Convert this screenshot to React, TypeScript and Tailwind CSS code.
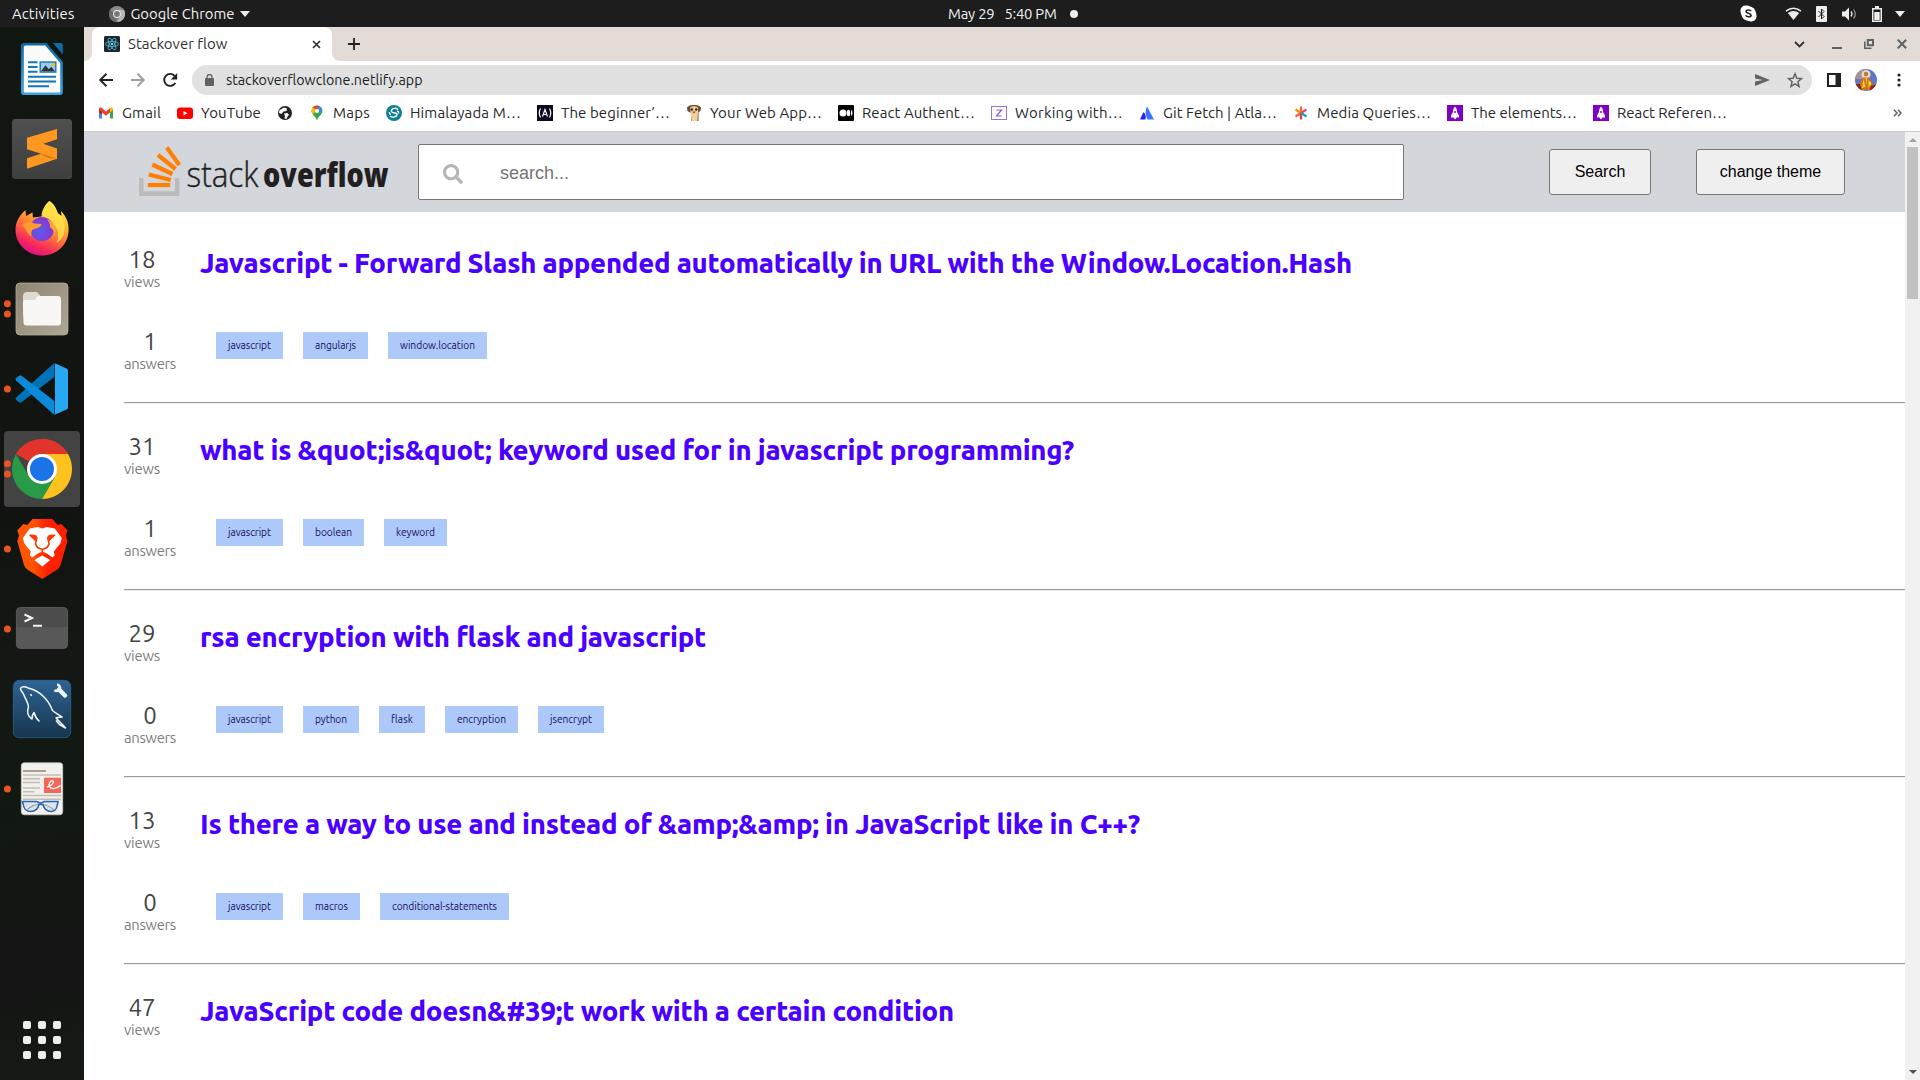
import { useLayoutEffect, useRef, useState, type ReactNode } from "react";
import { FaSearch } from "react-icons/fa";

const UI = "font-['Ubuntu','Noto_Sans',sans-serif]";

/* Text set to a given width by adjusting its tracking. */
function Fit({ w, className = "", children }: { w: number; className?: string; children: string }) {
  const ref = useRef<HTMLSpanElement>(null);
  const [gap, setGap] = useState(0);
  useLayoutEffect(() => {
    if (ref.current) setGap((w - ref.current.getBoundingClientRect().width) / children.length);
    // eslint-disable-next-line
  }, [w, children]);
  return (
    <span className={"block shrink-0 whitespace-nowrap " + className} style={{ width: w }}>
      <span ref={ref} className="inline-block" style={{ letterSpacing: gap }}>
        {children}
      </span>
    </span>
  );
}

/* ---------- top bar ---------- */

function TopBar() {
  return (
    <div className="grid h-[27px] shrink-0 grid-cols-[948px_1fr_auto] items-center bg-[#1d1d1d] text-[14.800px] leading-[26px] text-[#f2f2f2]">
      <div className="flex h-full items-center pl-3">
        <Fit w={62.500}>Activities</Fit>
        <svg className="ml-[34px]" width="16" height="16" viewBox="0 0 16 16">
          <circle cx="8" cy="8" r="8" fill="#8a8a8a" />
          <path d="M8 8 1 4a8 8 0 0 0 6 12z" fill="#6b6b6b" />
          <path d="M8 4h7a8 8 0 0 1-7 12l3.500-6z" fill="#b5b5b5" />
          <circle cx="8" cy="8" r="3.900" fill="#eee" />
          <circle cx="8" cy="8" r="2.900" fill="#777" />
        </svg>
        <Fit w={104} className="ml-[6px]">Google Chrome</Fit>
        <svg className="ml-[5px]" width="10" height="6" viewBox="0 0 10 6"><path d="M0 0h10L5 6z" fill="#eee" /></svg>
      </div>
      <div className="flex items-center">
        <Fit w={46.500}>May 29</Fit>
        <Fit w={52} className="ml-[10px]">5:40 PM</Fit>
        <span className="ml-[13px] size-2 rounded-full bg-[#eeeeee]" />
      </div>
      <div className="flex items-center pr-[15px]">
        <svg width="17" height="17" viewBox="0 0 17 17">
          <rect x="0.500" y="0.500" width="11" height="11" rx="5" fill="#fff" />
          <rect x="5.500" y="5.500" width="11" height="11" rx="5" fill="#fff" />
          <circle cx="8.500" cy="8.500" r="7.300" fill="#fff" />
          <path d="M11 6.200c-.6-1.500-4.800-1.700-4.900.3 0 2 5 1.300 5 3.700 0 2-4.500 2.200-5.300.1" fill="none" stroke="#222" strokeWidth="1.600" />
        </svg>
        <svg className="ml-[28px]" width="17" height="14" viewBox="0 0 17 14">
          <path d="M1 4.200Q8.500-1.800 16 4.200" fill="none" stroke="#eee" strokeWidth="1.500" />
          <path d="M2.800 6Q8.500 2 14.200 6L8.500 13z" fill="#eee" />
        </svg>
        <svg className="ml-[14px]" width="11" height="16" viewBox="0 0 11 16">
          <rect width="11" height="16" rx="1" fill="#eee" />
          <path d="M2.500 5 8 10.500 5.500 13V3L8 5.500 2.500 11" fill="none" stroke="#1d1d1d" />
        </svg>
        <svg className="ml-[15px]" width="16" height="14" viewBox="0 0 16 14">
          <path d="M0 4.500h3L7 .5v13l-4-4H0z" fill="#eee" />
          <path d="M9 4.500q2 2.500 0 5" fill="none" stroke="#eee" strokeWidth="1.300" />
          <path d="M11.500 2.500q3.500 4.500 0 9" fill="none" stroke="#999" strokeWidth="1.200" />
        </svg>
        <svg className="ml-[14px]" width="10" height="16" viewBox="0 0 10 16">
          <path d="M3 0h4v2h3v14H0V2h3z" fill="#eee" />
          <path d="M1.500 3.500h7v11h-7z" fill="#1d1d1d" />
          <path d="M2.300 6h5.400v8H2.300z" fill="#eee" />
        </svg>
        <svg className="ml-[13px]" width="10" height="6" viewBox="0 0 10 6"><path d="M0 0h10L5 6z" fill="#eee" /></svg>
      </div>
    </div>
  );
}

/* ---------- dock ---------- */

function Dots({ n }: { n: number }) {
  return (
    <>
      {(n === 2 ? [34.700, 45] : n === 1 ? [40] : []).map((y) => (
        <circle key={y} cx="7.400" cy={y} r="3.500" fill="#e95420" />
      ))}
    </>
  );
}

function DockItem({ dots = 0, children }: { dots?: number; children: ReactNode }) {
  return (
    <svg className="block shrink-0" width="84" height="80" viewBox="0 0 84 80">
      {children}
      <Dots n={dots} />
    </svg>
  );
}

function Dock() {
  return (
    <div className="flex w-[84px] shrink-0 flex-col bg-[linear-gradient(170deg,#10170f_0%,#121512_20%,#101310_45%,#151715_60%,#111911_72%,#141414_88%,#151a15_100%)] pt-[2px]">
      <DockItem>
        <defs>
          <linearGradient id="wr" x1="0" y1="0" x2="0" y2="1"><stop offset="0" stopColor="#0a6aa5" /><stop offset="1" stopColor="#3da5e0" /></linearGradient>
        </defs>
        <path d="M24 14h22.500L62.800 33v30a3 3 0 0 1-3 3H24a3 3 0 0 1-3-3V17a3 3 0 0 1 3-3z" fill="url(#wr)" />
        <path d="M53 14h7.800a2 2 0 0 1 2 2v9.500z" fill="#0e6ba8" />
        <path d="M25.300 16.500h20L60.200 34v28a1.500 1.500 0 0 1-1.500 1.500H25.300A1.500 1.500 0 0 1 23.800 62V18a1.500 1.500 0 0 1 1.500-1.500z" fill="#fbfbfb" />
        <path d="M28 33.300h9.500M28 38h9.500M28 42.700h9.500M28 47.700h28M28 52.500h28M28 57.300h21" stroke="#1477b5" strokeWidth="2" />
        <rect x="39.500" y="32.300" width="17" height="11.500" fill="#1b7fc0" />
        <rect x="41" y="33.800" width="14" height="8.500" fill="#9bcbea" />
        <path d="M41 42.300l4.500-6 3.300 4 2.500-2.500 3.700 4.500z" fill="#333" />
        <circle cx="53.500" cy="35.500" r="1.800" fill="#f5c211" />
      </DockItem>

      <DockItem>
        <defs>
          <linearGradient id="st" x1="0" y1="0" x2="0" y2="1"><stop offset="0" stopColor="#4f4f4f" /><stop offset="1" stopColor="#3f3f3f" /></linearGradient>
        </defs>
        <rect x="12" y="10" width="60" height="60" rx="3.500" fill="url(#st)" />
        <path d="M27 49.300 57 39.500v10.200L27 59.700z" fill="#ff9820" />
        <path d="M27 28.700 57 20v10.300L27 40.300z" fill="#ff9820" />
        <path d="M27 40.300V30L44.700 35.300 57 39.500v10.300L39.700 44.300z" fill="#ff9820" />
        <path d="M39.700 44.300 57 49.800l-9-1z" fill="#d67300" />
      </DockItem>

      <DockItem>
        <defs>
          <linearGradient id="fx" x1="0.800" y1="0.050" x2="0.350" y2="1"><stop offset="0" stopColor="#fff44f" /><stop offset=".3" stopColor="#ffbd2f" /><stop offset=".6" stopColor="#ff6a3c" /><stop offset=".85" stopColor="#f5245f" /><stop offset="1" stopColor="#d9138a" /></linearGradient>
          <radialGradient id="fg" cx=".4" cy=".6" r=".6"><stop offset="0" stopColor="#5a5cf0" /><stop offset="1" stopColor="#8a35d0" /></radialGradient>
        </defs>
        <path d="M49.500 12c4.500 3 6.500 7 8.500 12.500l3.500 2.500-.5-5c5 5 8 12 7.600 19.500C68 56 56.500 66.500 42 66.500S15.500 55 15.500 41c0-8 3.500-14 10-20l.5 6 6.500-3.500.5 5 8.500-1C42 21 45.500 15 49.500 12z" fill="url(#fx)" />
        <path d="M49.500 12c4.500 3 6.500 7 8.500 12.500l3.500 2.500c5 9 4.500 22-5 27 5-11-1-20-9.500-24-4-2-6-8-5.500-3 .5-6 4-12 8-15z" fill="#ffe14a" opacity=".85" />
        <circle cx="42" cy="40" r="12" fill="url(#fg)" />
        <path d="M22 36c5-4 9-3.500 12.500-1.500l7 .5-.5 2c-3 2.500-7 2.500-9 4.500q-1.500 2.500-.5 6c-4-2-5-7-9.500-11.500z" fill="#ff9a2c" />
        <path d="M47 30.500c8 2 12 12 5 19.500 3-6 2-9-2-12 .5-3-1-5-3-7.500z" fill="#ffa534" />
      </DockItem>

      <DockItem dots={2}>
        <defs>
          <linearGradient id="fi" x1="0" y1="0" x2="1" y2="1"><stop offset="0" stopColor="#8f8672" /><stop offset="1" stopColor="#aea795" /></linearGradient>
        </defs>
        <rect x="16" y="14" width="52" height="52" rx="4" fill="url(#fi)" stroke="#b4ac9b" strokeWidth=".8" />
        <path d="M23 27a4 4 0 0 1 3.500-4H37l3.500 4H58v20H23z" fill="#dedad2" />
        <path d="M23 34a3 3 0 0 1 3-3h8.500l3.500-4h20a3 3 0 0 1 3 3v23.500a3 3 0 0 1-3 3H26.500a3 3 0 0 1-3-3z" fill="#f8f7f6" />
      </DockItem>

      <DockItem dots={1}>
        <path d="M54.300 14v14L21.500 53.300a2 2 0 0 1-2.400 0l-3-2.600a1.500 1.500 0 0 1 0-2.200z" fill="#0073b7" />
        <path d="M54.300 66V52L21.500 26.700a2 2 0 0 0-2.400 0l-3 2.600a1.500 1.500 0 0 0 0 2.200z" fill="#0a8ad8" />
        <path d="M54.300 14 67 19.800a1.800 1.800 0 0 1 1 1.700v37a1.800 1.800 0 0 1-1 1.700L54.300 66c.5 0 .7-.8.700-1.500v-49c0-.7-.2-1.500-.7-1.500z" fill="#27a8f2" />
      </DockItem>

      <DockItem dots={2}>
        <rect x="4" y="2" width="76" height="76" rx="4" fill="#434343" />
        <path d="M42 40 16 25a30 30 0 0 1 52 0z" fill="#e1352b" />
        <path d="M42 10a30 30 0 0 1 26 15H42z" fill="#e1352b" />
        <path d="M42 25h26a30 30 0 0 1-26 45l13-22.500z" fill="#fcc31e" />
        <path d="M16 25a30 30 0 0 0 26 45l13-22.500L29 47.500z" fill="#289a48" />
        <circle cx="42" cy="40" r="15" fill="#fff" />
        <circle cx="42" cy="40" r="12" fill="#1a73e8" />
      </DockItem>

      <DockItem dots={1}>
        <defs>
          <linearGradient id="br" x1="0" x2="1"><stop offset=".3" stopColor="#ff5500" /><stop offset=".6" stopColor="#ff2000" /></linearGradient>
        </defs>
        <path d="M32.500 10h20l5 6 4-1 6 6.500-1.700 5 1.700 5.500L60.500 56q-1 3-4 5L42.300 70 28 61q-3-2-4-5L17.300 32 19 26.500 17.300 21.500l6-6.500 4 1z" fill="url(#br)" />
        <path d="M42.300 19.500l4.500-1.500 8 1.500 7 9.500-1.500 5.500-6.500 8 1 4-2.500 2-5.500-4-4.500-2-4.500 2-5.500 4-2.500-2 1-4-6.500-8-1.500-5.500 7-9.500 8-1.500z" fill="#fff" />
        <path d="M28.500 25.800q6-.8 8.500 1.200l-1.500 5.500zM56 25.800q-6-.8-8.500 1.200l1.500 5.500z" fill="#ff3a00" />
        <path d="M37 28l-1.500 7 2 3.500 4.800 2 4.800-2 2-3.500-1.500-7M42.300 40v4" fill="none" stroke="#ff3a00" strokeWidth="1.600" />
        <path d="M42.300 46.500l8 4.500-8 6.500-8-6.500z" fill="#fff" />
      </DockItem>

      <DockItem dots={1}>
        <rect x="16.400" y="18.600" width="51.200" height="40.800" rx="4" fill="#585858" stroke="#666" strokeWidth=".8" />
        <path d="M16.800 38V22.500a3.600 3.600 0 0 1 3.600-3.600h43.200a3.600 3.600 0 0 1 3.600 3.600V38z" fill="#4c4c4c" />
        <path d="M24.500 25.500l7.500 3.500-7.500 3.500M33 36.800h9" fill="none" stroke="#f2f2f2" strokeWidth="2" />
      </DockItem>

      <DockItem>
        <defs>
          <linearGradient id="my" x1="0" y1="0" x2="0" y2="1"><stop offset="0" stopColor="#2d6494" /><stop offset="1" stopColor="#17354f" /></linearGradient>
        </defs>
        <rect x="13.300" y="11.300" width="57.400" height="57.400" rx="6" fill="url(#my)" stroke="#2b6a9e" strokeWidth=".7" />
        <path d="M39.500 52.500c-3-2.500-4.500-5-5.500-9-1.500 1.500-2 4-2 6.500-3.500-2-5.500-6-3.500-12.500-1-6-3.500-8-5-12.500-1-2-3-3.500-3-5.500.5-2.200 5-2.200 7.500-.5C40 21.500 48.500 31 52.500 41.500c3 2.500 6 4 9.500 6.500-2 .5-4.500 0-6 .8 2.500 3.500 5.500 5 9.500 10.200l-6-3.500-3.500-4" fill="none" stroke="#f3f8fb" strokeWidth="1.500" strokeLinejoin="round" />
        <path d="M30.500 25l1 2" stroke="#fff" strokeWidth="1.500" />
        <path d="M59 20.500 65 26.500" stroke="#eef6fb" strokeWidth="4.500" strokeLinecap="round" />
        <path d="M57 15.500a3.200 3.200 0 1 1-2.500 5.500" fill="none" stroke="#eef6fb" strokeWidth="2.600" />
      </DockItem>

      <DockItem dots={1}>
        <rect x="21.300" y="13.800" width="41.400" height="52" rx="3" fill="#f1f0ef" stroke="#cfcfcf" strokeWidth=".7" />
        <path d="M23 22h23" stroke="#a9a491" strokeWidth="2" />
        <path d="M23 26h38M23 29.700h17M23 33.500h17M23 39h17M23 42.700h11.500M23 46.500h38M23 50.300h38" stroke="#c2beb0" strokeWidth="1.500" />
        <rect x="44" y="28.700" width="17" height="15.300" fill="#f4685a" />
        <path d="M47 38c4-1 7.500-4 6-6-2-1.500-5 3-3.500 5.500 1.500 3 6 3 11-1" fill="none" stroke="#fff" strokeWidth="1.300" />
        <path d="M26.500 61.500Q33 55 41 55.500t14 6.500" fill="none" stroke="#777" strokeWidth="1.200" />
        <path d="M22.500 52.500h14l3 1.200h2l3-1.200h13.500l-.8 4q-1 6-6 6-6.500 0-8.200-7h-4q-1.500 7-8.500 7-6 0-7-6z" fill="#c4d3e6" fillOpacity=".45" stroke="#2a63ae" strokeWidth="1.500" />
      </DockItem>

      <div className="mt-auto mb-[21px] grid grid-cols-[8px_8px_8px] gap-[7px] self-center">
        {Array.from({ length: 9 }, (_, i) => (
          <span key={i} className="size-2 rounded-[2px] bg-[#eeeeec]" />
        ))}
      </div>
    </div>
  );
}

/* ---------- browser chrome ---------- */

function ReactMark() {
  return (
    <svg width="16" height="16" viewBox="0 0 16 16">
      <rect width="16" height="16" rx="1.500" fill="#20232a" />
      <g fill="none" stroke="#4fc3e0" strokeWidth=".8">
        <ellipse cx="8" cy="8" rx="6.500" ry="2.500" />
        <ellipse cx="8" cy="8" rx="6.500" ry="2.500" transform="rotate(60 8 8)" />
        <ellipse cx="8" cy="8" rx="6.500" ry="2.500" transform="rotate(120 8 8)" />
      </g>
      <circle cx="8" cy="8" r="1.300" fill="#61dafb" />
    </svg>
  );
}

function TabStrip() {
  return (
    <div className="flex h-[34px] shrink-0 items-center bg-[#e3dbd5]">
      <svg className="self-end" width="8" height="8" viewBox="0 0 8 8"><path d="M8 0v8H0a8 8 0 0 0 8-8z" fill="#fff" /></svg>
      <div className="flex h-full w-[240px] items-center rounded-t-lg bg-white pl-3">
        <ReactMark />
        <Fit w={99.500} className="ml-2 text-[15px] leading-5 text-[#303134]">Stackover flow</Fit>
        <svg className="ml-[84px]" width="9" height="9" viewBox="0 0 9 9"><path d="M1 1l7 7M8 1 1 8" stroke="#2b2b2b" strokeWidth="1.600" /></svg>
      </div>
      <svg className="self-end" width="8" height="8" viewBox="0 0 8 8"><path d="M0 0v8h8a8 8 0 0 1-8-8z" fill="#fff" /></svg>
      <svg className="ml-2" width="12" height="12" viewBox="0 0 12 12"><path d="M6 0v12M0 6h12" stroke="#222" strokeWidth="1.800" /></svg>
      <div className="ml-auto flex items-center pr-[13px]">
        <svg width="11" height="7" viewBox="0 0 11 7"><path d="M1 1l4.500 4.500L10 1" fill="none" stroke="#333" strokeWidth="1.800" /></svg>
        <svg className="ml-[27px] mt-[8px]" width="10" height="2" viewBox="0 0 10 2"><path d="M0 0h10v2H0z" fill="#5f6368" /></svg>
        <svg className="ml-[22px]" width="10" height="10" viewBox="0 0 10 10">
          <path d="M3.800 1h5.200v5.200H3.800z" fill="none" stroke="#5f6368" strokeWidth="2" />
          <path d="M.8 2.500v6.700h6.700" fill="none" stroke="#5f6368" strokeWidth="1.600" />
        </svg>
        <svg className="ml-[23px]" width="10" height="10" viewBox="0 0 10 10"><path d="M.8.8l8.400 8.400M9.200.8.800 9.200" stroke="#5f6368" strokeWidth="2" /></svg>
      </div>
    </div>
  );
}

function Toolbar() {
  return (
    <div className="flex h-[38px] shrink-0 items-center bg-white pl-[14px] pr-[19px]">
      <svg width="16" height="16" viewBox="0 0 16 16"><path d="M15 8H2.500M8.500 1.800 2.200 8l6.300 6.200" fill="none" stroke="#222" strokeWidth="1.900" /></svg>
      <svg className="ml-[16px]" width="16" height="16" viewBox="0 0 16 16"><path d="M1 8h12.500M7.500 1.800 13.800 8l-6.300 6.200" fill="none" stroke="#9e9e9e" strokeWidth="1.900" /></svg>
      <svg className="ml-[16px]" width="16" height="16" viewBox="0 0 16 16">
        <path d="M13.300 11a6 6 0 1 1-.7-7.200" fill="none" stroke="#222" strokeWidth="1.900" />
        <path d="M15.200 1v6.500H8.700z" fill="#222" />
      </svg>
      <div className="ml-[14px] flex h-[30px] w-[1620px] items-center rounded-full bg-[#e1e1e1] pl-[13px] pr-[9px]">
        <svg width="9" height="12" viewBox="0 0 9 12">
          <rect y="4" width="9" height="8" rx="1" fill="#5f6368" />
          <path d="M2 5V3a2.500 2.500 0 0 1 5 0v2" fill="none" stroke="#5f6368" strokeWidth="1.300" />
        </svg>
        <Fit w={196.500} className="ml-3 text-[14.300px] leading-5 text-[#202124]">stackoverflowclone.netlify.app</Fit>
        <svg className="ml-auto" width="15" height="12" viewBox="0 0 15 12"><path d="M0 0l15 6-15 6V7.500L8 6 0 4.500z" fill="#5f6368" /></svg>
        <svg className="ml-[17px]" width="16" height="16" viewBox="0 0 16 16"><path d="M8 1.800l1.800 4.400 4.700.4-3.600 3.100 1.100 4.600L8 11.800l-4 2.500 1.100-4.600L1.500 6.600l4.700-.4z" fill="none" stroke="#5f6368" strokeWidth="1.500" /></svg>
      </div>
      <svg className="ml-[15px]" width="14" height="14" viewBox="0 0 14 14"><path d="M1 1h12v12H1z" fill="#fff" stroke="#222" strokeWidth="2" /><path d="M8.500 1H13v12H8.500z" fill="#222" /></svg>
      <svg className="ml-[14px]" width="22" height="22" viewBox="0 0 22 22">
        <defs><clipPath id="av"><circle cx="11" cy="11" r="11" /></clipPath></defs>
        <g clipPath="url(#av)">
          <rect width="22" height="22" fill="#5f78c4" />
          <path d="M0 0h8v10H0z" fill="#a98f98" />
          <circle cx="11" cy="5.500" r="4.500" fill="#e8dcc0" />
          <circle cx="11" cy="5" r="2.200" fill="#b9783c" />
          <path d="M5 13l3.500-4.500h5L17 13l1 3-3 5H7l-3-4z" fill="#cf7414" />
          <path d="M8.500 10l2 8-3.500 1zM13.500 11l3 3-3 5zM10.500 9h1.500l-.5 8z" fill="#f7cf4a" />
          <path d="M0 15h5l2 7H0zM16 17l6-2v8h-8z" fill="#8e2416" />
        </g>
      </svg>
      <svg className="ml-auto" width="4" height="14" viewBox="0 0 4 14"><circle cx="2" cy="2" r="1.600" fill="#222" /><circle cx="2" cy="7" r="1.600" fill="#222" /><circle cx="2" cy="12" r="1.600" fill="#222" /></svg>
    </div>
  );
}

const rocket = (
  <>
    <rect width="16" height="16" fill="#8000c8" />
    <path d="M8 1.500q2.500 2.500 2.200 6l1.800 3v2H9.500L8 14.500 6.500 12.500H4v-2l1.800-3Q5.500 4 8 1.500z" fill="#fff" />
    <circle cx="8" cy="7" r="1" fill="#8000c8" />
  </>
);

const bookmarks: { label?: string; w?: number; icon: ReactNode }[] = [
  {
    label: "Gmail", w: 39,
    icon: (
      <>
        <path d="M1 4v9.500h3V7z" fill="#4285f4" /><path d="M15 4v9.500h-3V7z" fill="#34a853" />
        <path d="M1 5V3.500Q2.500 1.500 4 3l4 3.500L12 3v4.500l-4 3.200L1 5z" fill="#ea4335" />
        <path d="M12 3q2-1.500 3 .5V5l-3 2.500z" fill="#fbbc04" /><path d="M1 4.500 4 7v3L1 7.500z" fill="#c5221f" />
      </>
    ),
  },
  { label: "YouTube", w: 60, icon: <><rect y="2.500" width="16" height="11.500" rx="3" fill="#f00" /><path d="M6.500 6v4.500l4-2.250z" fill="#fff" /></> },
  {
    icon: (
      <>
        <circle cx="8" cy="8" r="7" fill="#222" />
        <path d="M2.500 5 7 2.500l3 1-.5 2.500-3 .5L4.500 9 2 8zM7 8.500l3.500-.5 1.500 2-1.500 1.500-1 2.500-2-.5L8 11z" fill="#fff" />
      </>
    ),
  },
  {
    label: "Maps", w: 37,
    icon: (
      <>
        <path d="M8 .5A5.500 5.500 0 0 1 13.500 6C13.500 9.500 9.500 11 8 15.500 6.500 11 2.500 9.500 2.500 6A5.500 5.500 0 0 1 8 .5z" fill="#34a853" />
        <path d="M8 .5A5.500 5.500 0 0 0 3.700 2.600L6.500 5 10.500 1.100A5.500 5.500 0 0 0 8 .5z" fill="#ea4335" />
        <path d="M10.500 1.100 6 6.500 8 8.500l5.300-4A5.500 5.500 0 0 0 10.500 1.100z" fill="#4285f4" />
        <path d="M3.700 2.600A5.500 5.500 0 0 0 4 9.600L8 5z" fill="#fbbc04" />
        <circle cx="8" cy="6" r="2" fill="#fff" />
      </>
    ),
  },
  {
    label: "Himalayada M…", w: 111,
    icon: (
      <>
        <circle cx="8" cy="8" r="8" fill="#0b7f93" />
        <path d="M12 4.500C9 2 4.500 4 5.500 6.500S11 7 11 9.500 6 13 4 11M3.500 7q-.5 2 1.500 2.500M12.500 8.500Q13 6.500 11 6" fill="none" stroke="#fff" strokeWidth="1.400" />
      </>
    ),
  },
  {
    label: "The beginner’…", w: 109,
    icon: (
      <>
        <rect width="16" height="16" fill="#0a0a23" />
        <path d="M3.500 3.500q-2.500 4.500 0 9M12.500 3.500q2.500 4.500 0 9M5.500 11.500 8 4.500l2.500 7M7 9.500h2" fill="none" stroke="#fff" strokeWidth="1.200" />
      </>
    ),
  },
  {
    label: "Your Web App…", w: 112,
    icon: (
      <>
        <path d="M1 2.500Q3-.3 8 0q5-.3 7 2.500L14.500 6l-2 1v9H5V8L1.500 6z" fill="#6b4a2e" />
        <path d="M4 2.500q4-3 8 0V7l-.5 9H5.500L4.500 7z" fill="#f0cf9a" />
        <circle cx="5.800" cy="4.500" r="1.200" fill="#222" /><circle cx="10.200" cy="4.500" r="1.200" fill="#222" />
        <path d="M6.500 6.500h3L8 8.500z" fill="#8b2a1a" />
      </>
    ),
  },
  {
    label: "React Authent…", w: 113,
    icon: (
      <>
        <rect width="16" height="16" rx="1" fill="#000" />
        <circle cx="5" cy="8" r="3.500" fill="#fff" /><ellipse cx="10.500" cy="8" rx="1.700" ry="3.300" fill="#fff" /><ellipse cx="13.700" cy="8" rx=".7" ry="3" fill="#fff" />
      </>
    ),
  },
  {
    label: "Working with…", w: 108,
    icon: (
      <>
        <rect x=".5" y="1.500" width="15" height="13" fill="#fff" stroke="#9a74dc" />
        <path d="M5.500 5h5l-5 6h5" fill="none" stroke="#8b5fd6" strokeWidth="1.200" />
      </>
    ),
  },
  {
    label: "Git Fetch | Atla…", w: 114,
    icon: (
      <>
        <path d="M4.500 7 1 14.500h5.500Q7.500 10 4.500 7z" fill="#2a1fff" />
        <path d="M8 1.500Q5 7 8.500 14.500H15z" fill="#3a74ff" />
      </>
    ),
  },
  {
    label: "Media Queries…", w: 114,
    icon: (
      <g strokeWidth="2.200" fill="none">
        <path d="M8 8V1.500" stroke="#ff6a1f" /><path d="M8 8 2.500 4.500" stroke="#ff8a00" /><path d="M8 8l5.500-3.500" stroke="#e8447a" />
        <path d="M8 8l-5.500 3.500" stroke="#ff5a2a" /><path d="M8 8v6.500" stroke="#e0402e" /><path d="M8 8l5.500 3.500" stroke="#12a5b5" />
      </g>
    ),
  },
  { label: "The elements…", w: 106, icon: rocket },
  { label: "React Referen…", w: 110, icon: rocket },
];

function Bookmarks() {
  return (
    <div className="flex h-[33px] shrink-0 items-center gap-4 border-b border-[#cbcdce] bg-white pb-[4px] pl-[14px] pr-[18px] text-[15px] leading-5 text-[#26272a]">
      {bookmarks.map((b, i) => (
        <div key={i} className="flex shrink-0 items-center gap-2">
          <svg width="16" height="16" viewBox="0 0 16 16">{b.icon}</svg>
          {b.label && <Fit w={b.w!}>{b.label}</Fit>}
        </div>
      ))}
      <svg className="ml-auto" width="9" height="8" viewBox="0 0 9 8"><path d="M1 .8 4 4 1 7.200M5 .8 8 4 5 7.200" fill="none" stroke="#5f6368" strokeWidth="1.500" /></svg>
    </div>
  );
}

/* ---------- page ---------- */

function Logo() {
  return (
    <svg className="ml-[54px] shrink-0" width="252" height="56" viewBox="138 144 252 56">
      <path d="M139 178h4.500v13.300H175V178h4.500v18H139z" fill="#bcbbbb" />
      <g fill="none" stroke="#ff7f00" strokeWidth="4.200">
        <path d="M147.800 185h22.400" />
        <path d="M148.700 174.500 170.800 180" />
        <path d="M152.300 164.500 172.500 174" />
        <path d="M158 155 175.500 169" />
        <path d="M166.800 147.500 179.300 165" />
      </g>
      <text x="186.500" y="187" fontSize="34" textLength="72" lengthAdjust="spacingAndGlyphs" fill="#231f20" className="font-['Open_Sans',sans-serif] font-light" stroke="#231f20" strokeWidth=".4">stack</text>
      <text x="263" y="187" fontSize="34" textLength="125.500" lengthAdjust="spacingAndGlyphs" fill="#231f20" className="font-['Open_Sans',sans-serif] font-extrabold">overflow</text>
    </svg>
  );
}

function Header() {
  return (
    <header className="flex h-20 shrink-0 items-center bg-[#d3d7dc] font-['Liberation_Sans',sans-serif]">
      <Logo />
      <div className="ml-[28px] flex h-[56px] w-[986px] shrink-0 items-center rounded-[2px] border border-[#767676] bg-white pl-[24px]">
        <FaSearch className="mt-[3px] size-5 text-[#b5b5b5]" />
        <span className="ml-[37px] pt-[2px] text-[18px] text-[#757575]">search...</span>
      </div>
      <button className="ml-[145px] h-[46px] w-[102px] rounded-[3px] border border-[#767676] bg-[#efefef] text-base text-black">Search</button>
      <button className="ml-[45px] h-[46px] w-[149px] rounded-[3px] border border-[#767676] bg-[#efefef] text-base text-black">change theme</button>
    </header>
  );
}

type Tag = [string, number];
type Question = { views: number; answers?: number; title: string; w: number; tags: Tag[] };

const questions: Question[] = [
  { views: 18, answers: 1, title: "Javascript - Forward Slash appended automatically in URL with the Window.Location.Hash", w: 1152, tags: [["javascript", 43], ["angularjs", 41], ["window.location", 75]] },
  { views: 31, answers: 1, title: "what is &quot;is&quot; keyword used for in javascript programming?", w: 874, tags: [["javascript", 43], ["boolean", 37], ["keyword", 39]] },
  { views: 29, answers: 0, title: "rsa encryption with flask and javascript", w: 506, tags: [["javascript", 43], ["python", 32], ["flask", 22], ["encryption", 49], ["jsencrypt", 42]] },
  { views: 13, answers: 0, title: "Is there a way to use and instead of &amp;&amp; in JavaScript like in C++?", w: 940, tags: [["javascript", 43], ["macros", 33], ["conditional-statements", 105]] },
  { views: 47, title: "JavaScript code doesn&#39;t work with a certain condition", w: 754, tags: [] },
];

function Count({ n, label, w }: { n: number; label: string; w: number }) {
  return (
    <div className="flex shrink-0 flex-col items-center" style={{ width: w }}>
      <span className="text-[24px] leading-[28px] text-[#444444]">{n}</span>
      <Fit w={w} className="text-[14.800px] leading-4 text-[#7d7d7d]">{label}</Fit>
    </div>
  );
}

function QuestionRow({ q }: { q: Question }) {
  return (
    <article className="ml-10 flex h-[187px] shrink-0 flex-col border-b border-[#eeeeee] pt-[29px] shadow-[inset_0_-1px_0_#9a9a9a]">
      <div className="flex h-11 items-start gap-10">
        <Count n={q.views} label="views" w={36} />
        <h2 className="-mt-px text-[27.500px] font-extrabold leading-9 text-[#4b00ff]">
          <Fit w={q.w}>{q.title}</Fit>
        </h2>
      </div>
      {q.answers !== undefined && (
        <div className="mt-[38px] flex h-11 items-start gap-10">
          <Count n={q.answers} label="answers" w={52} />
          <div className="mt-[4px] flex gap-5">
            {q.tags.map(([name, w]) => (
              <span key={name} className="flex h-[27px] items-center bg-[#adc9f9] px-3 text-[10.200px] text-[#170a66]">
                <Fit w={w}>{name}</Fit>
              </span>
            ))}
          </div>
        </div>
      )}
    </article>
  );
}

function Scrollbar() {
  return (
    <div className="flex w-[15px] shrink-0 flex-col items-center bg-[#f1f1f1]">
      <svg className="mt-[6px]" width="8" height="4" viewBox="0 0 8 4"><path d="M4 0l4 4H0z" fill="#a3a3a3" /></svg>
      <div className="mt-[5px] h-[152px] w-[11px] bg-[#c1c1c1]" />
      <svg className="mt-auto mb-[6px]" width="8" height="4" viewBox="0 0 8 4"><path d="M4 4l4-4H0z" fill="#505050" /></svg>
    </div>
  );
}

export default function App() {
  return (
    <div className={`flex h-[1080px] w-[1920px] flex-col overflow-hidden bg-white ${UI}`}>
      <TopBar />
      <div className="flex h-[1053px] shrink-0">
        <Dock />
        <div className="flex min-w-0 flex-1 flex-col">
          <TabStrip />
          <Toolbar />
          <Bookmarks />
          <div className="flex min-h-0 flex-1">
            <main className="flex min-w-0 flex-1 flex-col overflow-hidden bg-white">
              <Header />
              <div className="flex flex-col pt-[5px]">
                {questions.map((q) => (
                  <QuestionRow key={q.title} q={q} />
                ))}
              </div>
            </main>
            <Scrollbar />
          </div>
        </div>
      </div>
    </div>
  );
}
